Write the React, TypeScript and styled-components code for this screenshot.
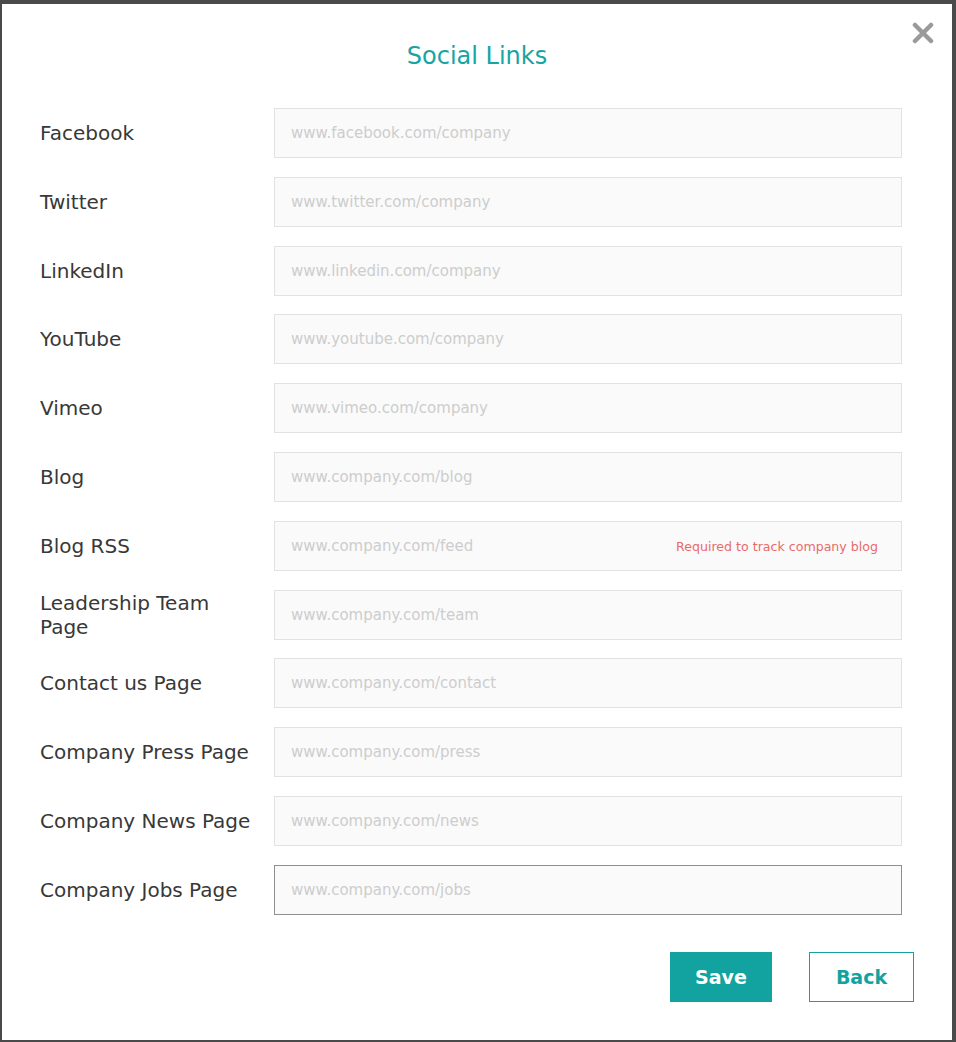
import styled, { createGlobalStyle } from "styled-components";

const GlobalStyle = createGlobalStyle`
  html, body {
    margin: 0;
    padding: 0;
    background: #4a4a4a;
  }
  body {
    font-family: "DejaVu Sans", "Noto Sans", sans-serif;
  }
`;

const Backdrop = styled.div`
  width: 956px;
  height: 1042px;
  padding: 4px 4px 2px 2px;
  box-sizing: border-box;
  background: #4a4a4a;
`;

const Modal = styled.div`
  position: relative;
  height: 100%;
  background: #ffffff;
  padding: 38px 38px 0 38px;
  box-sizing: border-box;
`;

const CloseButton = styled.button`
  position: absolute;
  top: 16px;
  right: 16px;
  width: 26px;
  height: 26px;
  padding: 0;
  border: none;
  background: transparent;
  cursor: pointer;
  display: flex;
  align-items: center;
  justify-content: center;
`;

const Title = styled.h2`
  margin: 0 0 38px;
  text-align: center;
  font-size: 24px;
  font-weight: 400;
  line-height: 28px;
  color: #17a5a3;
`;

const Form = styled.div`
  display: flex;
  flex-direction: column;
  gap: 18.8px;
  padding-right: 12px;
`;

const Row = styled.div`
  display: grid;
  grid-template-columns: 234px 1fr;
  align-items: center;
`;

const Label = styled.label`
  font-size: 20px;
  line-height: 24px;
  color: #383838;
  padding-right: 18px;
`;

const Field = styled.div`
  position: relative;
`;

const Input = styled.input<{ $focused?: boolean }>`
  display: block;
  width: 100%;
  height: 50px;
  box-sizing: border-box;
  padding: 0 16px;
  background: #fafafa;
  border: 1px solid ${(p) => (p.$focused ? "#8f8f8f" : "#e2e2e2")};
  font-family: inherit;
  font-size: 15px;
  color: #333;
  caret-color: #222;
  outline: none;

  &::placeholder {
    color: #cdcdcd;
  }
`;

const Hint = styled.span`
  position: absolute;
  right: 24px;
  top: 50%;
  transform: translateY(-50%);
  font-size: 12.6px;
  color: #e86b6b;
  pointer-events: none;
`;

const Actions = styled.div`
  display: flex;
  justify-content: flex-end;
  gap: 37px;
  margin-top: 37px;
`;

const Button = styled.button<{ $primary?: boolean }>`
  height: 50px;
  padding: 0;
  width: ${(p) => (p.$primary ? "102px" : "105px")};
  font-family: inherit;
  font-size: 19px;
  font-weight: 700;
  cursor: pointer;
  background: ${(p) => (p.$primary ? "#12a3a0" : "#ffffff")};
  color: ${(p) => (p.$primary ? "#ffffff" : "#12a3a0")};
  border: 1px solid #12a3a0;
`;

const links = [
  { label: "Facebook", placeholder: "www.facebook.com/company" },
  { label: "Twitter", placeholder: "www.twitter.com/company" },
  { label: "LinkedIn", placeholder: "www.linkedin.com/company" },
  { label: "YouTube", placeholder: "www.youtube.com/company" },
  { label: "Vimeo", placeholder: "www.vimeo.com/company" },
  { label: "Blog", placeholder: "www.company.com/blog" },
  { label: "Blog RSS", placeholder: "www.company.com/feed", hint: "Required to track company blog" },
  { label: "Leadership Team Page", placeholder: "www.company.com/team" },
  { label: "Contact us Page", placeholder: "www.company.com/contact" },
  { label: "Company Press Page", placeholder: "www.company.com/press" },
  { label: "Company News Page", placeholder: "www.company.com/news" },
  { label: "Company Jobs Page", placeholder: "www.company.com/jobs", focused: true },
];

const App = () => {
  return (
    <>
      <GlobalStyle />
      <Backdrop>
        <Modal>
          <CloseButton aria-label="Close">
            <svg width="22" height="22" viewBox="0 0 22 22">
              <path d="M3 3 L19 19 M19 3 L3 19" stroke="#9a9a9a" strokeWidth="4.5" strokeLinecap="round" />
            </svg>
          </CloseButton>
          <Title>Social Links</Title>
          <Form>
            {links.map((link) => (
              <Row key={link.label}>
                <Label>{link.label}</Label>
                <Field>
                  <Input placeholder={link.placeholder} $focused={link.focused} autoFocus={link.focused} />
                  {link.hint && <Hint>{link.hint}</Hint>}
                </Field>
              </Row>
            ))}
          </Form>
          <Actions>
            <Button $primary>Save</Button>
            <Button>Back</Button>
          </Actions>
        </Modal>
      </Backdrop>
    </>
  );
};

export default App;
